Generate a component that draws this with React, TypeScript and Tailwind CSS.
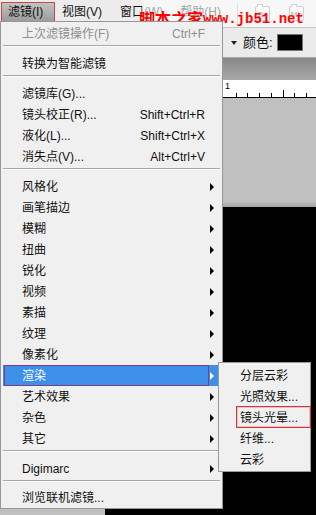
import React from "react";

type Item =
  | { label: string; shortcut?: string; arrow?: boolean; disabled?: boolean; active?: boolean }
  | "sep";

const items: Item[] = [
  { label: "上次滤镜操作(F)", shortcut: "Ctrl+F", disabled: true },
  "sep",
  { label: "转换为智能滤镜" },
  "sep",
  { label: "滤镜库(G)..." },
  { label: "镜头校正(R)...", shortcut: "Shift+Ctrl+R" },
  { label: "液化(L)...", shortcut: "Shift+Ctrl+X" },
  { label: "消失点(V)...", shortcut: "Alt+Ctrl+V" },
  "sep",
  { label: "风格化", arrow: true },
  { label: "画笔描边", arrow: true },
  { label: "模糊", arrow: true },
  { label: "扭曲", arrow: true },
  { label: "锐化", arrow: true },
  { label: "视频", arrow: true },
  { label: "素描", arrow: true },
  { label: "纹理", arrow: true },
  { label: "像素化", arrow: true },
  { label: "渲染", arrow: true, active: true },
  { label: "艺术效果", arrow: true },
  { label: "杂色", arrow: true },
  { label: "其它", arrow: true },
  "sep",
  { label: "Digimarc", arrow: true },
  "sep",
  { label: "浏览联机滤镜..." },
];

const subItems = ["分层云彩", "光照效果...", "镜头光晕...", "纤维...", "云彩"];

function Arrow({ white }: { white?: boolean }) {
  return (
    <span
      className={
        "block w-0 h-0 border-y-[4px] border-y-transparent border-l-[4px] " +
        (white ? "border-l-white" : "border-l-black")
      }
    />
  );
}

function MenuRow({ item }: { item: Exclude<Item, "sep"> }) {
  return (
    <div
      className={
        "relative h-[21px] ml-[2px] mr-[4px] pl-[19px] flex items-center " +
        (item.active ? "bg-[#3d8fe8] text-white" : item.disabled ? "text-[#8e8e8e]" : "text-[#111]")
      }
    >
      {item.active && <div className="absolute left-[1px] top-0 w-[205px] h-[21px] border border-[#7a3f8a]" />}
      <span className="flex-1 whitespace-nowrap">{item.label}</span>
      {item.shortcut && <span className="whitespace-nowrap text-right">{item.shortcut}</span>}
      <span className="w-[13px] pl-[5px] flex items-center">{item.arrow && <Arrow white={item.active} />}</span>
    </div>
  );
}

function AppIcon({ text }: { text: string }) {
  return (
    <div className="relative w-[15px] h-[15px] border border-[#8a8a8a] rounded-[2px] bg-[#f4f4f4] flex items-end justify-center">
      <div className="absolute -top-[3px] left-[1px] w-[6px] h-[3px] border border-b-0 border-[#8a8a8a] rounded-t-[1px] bg-[#f4f4f4]" />
      <span className="text-[8px] leading-[10px] text-[#666] font-bold">{text}</span>
    </div>
  );
}

export default function App() {
  return (
    <div className="relative w-[316px] h-[515px] overflow-hidden bg-[#c0c0c0] flex flex-col text-[12px] font-['Liberation_Sans','Noto_Sans_CJK_SC',sans-serif]">
      {/* menu bar */}
      <div className="h-[28px] shrink-0 bg-[#ececec] border-b border-[#c6c6c6] flex items-start">
        <div className="mt-[2px] ml-[1px] h-[20px] w-[54px] border border-[#c84848] bg-linear-to-b from-[#c2c2c2] to-[#9c9c9c] flex items-center pl-[6px] text-[#111]">
          滤镜(I)
        </div>
        <div className="ml-[7px] mt-[2px] h-[20px] flex items-center text-[#111]">视图(V)</div>
        <div className="ml-[18px] mt-[2px] h-[20px] flex items-center text-[#111]">窗口(W)</div>
        <div className="ml-[17px] mt-[2px] h-[20px] flex items-center text-[#111]">帮助(H)</div>
        <div className="ml-auto h-full flex items-center pr-[12px]">
          <div className="w-px h-[22px] bg-[#b4b4b4]" />
          <div className="ml-[17px]">
            <AppIcon text="Br" />
          </div>
          <div className="ml-[19px]">
            <AppIcon text="Mb" />
          </div>
        </div>
      </div>

      {/* options bar */}
      <div className="h-[30px] shrink-0 bg-[#ebebeb] border-b border-[#a8a8a8] flex items-center pl-[231px]">
        <span className="w-0 h-0 border-x-[3px] border-x-transparent border-t-[4px] border-t-[#222]" />
        <span className="ml-[6px] text-[#111] text-[13px]">颜色:</span>
        <div className="ml-[4px] w-[26px] h-[17px] bg-black border border-[#777]" />
      </div>

      {/* document tab */}
      <div className="h-[22px] shrink-0 bg-linear-to-b from-[#888] to-[#a9a9a9]" />

      {/* ruler */}
      <div className="relative h-[18px] shrink-0 bg-white border-b border-black">
        <span className="absolute left-[225px] top-[1px] text-[9px] leading-[10px] text-black">1</span>
        <svg className="block" width="316" height="17">
          {[236, 247, 259, 271, 283, 294, 306].map((x, i) => (
            <line key={x} x1={x + 0.5} x2={x + 0.5} y1={i === 4 ? 10 : 13} y2={17} stroke="#000" strokeWidth="1" />
          ))}
        </svg>
      </div>

      {/* workspace */}
      <div className="flex-1 flex flex-col">
        <div className="h-[104px] bg-[#c0c0c0]" />
        <div className="h-[5px] bg-linear-to-b from-[#bcbcbc] to-[#a2a2a2]" />
        <div className="flex-1 flex">
          <div className="w-[105px] bg-[#c0c0c0]" />
          <div className="flex-1 bg-black" />
        </div>
      </div>

      {/* watermark */}
      <div className="absolute left-[142px] top-0 w-[174px] h-[27px] bg-white/60" />
      <div className="absolute left-[139px] top-[8px] flex items-end text-[#ff0000] whitespace-nowrap">
        <span className="text-[16px] leading-[20px] font-bold font-['Noto_Sans_CJK_SC',sans-serif]">脚本之家</span>
        <span className="text-[14px] leading-[18px] font-bold font-['Liberation_Mono',monospace]">www.jb51.net</span>
      </div>

      {/* filter menu */}
      <div className="absolute left-0 top-[21px] w-[223px] bg-[#f0f0f0] border border-[#979797] pt-[1px]">
        {items.map((item, i) =>
          item === "sep" ? (
            <div key={i} className={(i === items.length - 2 ? "h-[8px]" : "h-[9px]") + " pt-[1px] mx-[2px]"}>
              <div className="border-t border-[#a6a6a6] border-b border-b-white" />
            </div>
          ) : (
            <MenuRow key={i} item={item} />
          )
        )}
      </div>

      {/* render submenu */}
      <div className="absolute left-[218px] top-[362px] w-[93px] bg-[#f0f0f0] border border-[#9a9a9a] pt-[2px] pb-[1px]">
        {subItems.map((s, i) => (
          <div key={s} className="relative h-[21px] pl-[21px] flex items-center text-[#111] whitespace-nowrap">
            {i === 2 && (
              <div className="absolute left-[17px] -right-[1px] top-[-1px] h-[22px] border border-[#cc3a3a] shadow-[inset_0_0_0_1px_#f0c0c0]" />
            )}
            <span className="relative">{s}</span>
          </div>
        ))}
      </div>
    </div>
  );
}
